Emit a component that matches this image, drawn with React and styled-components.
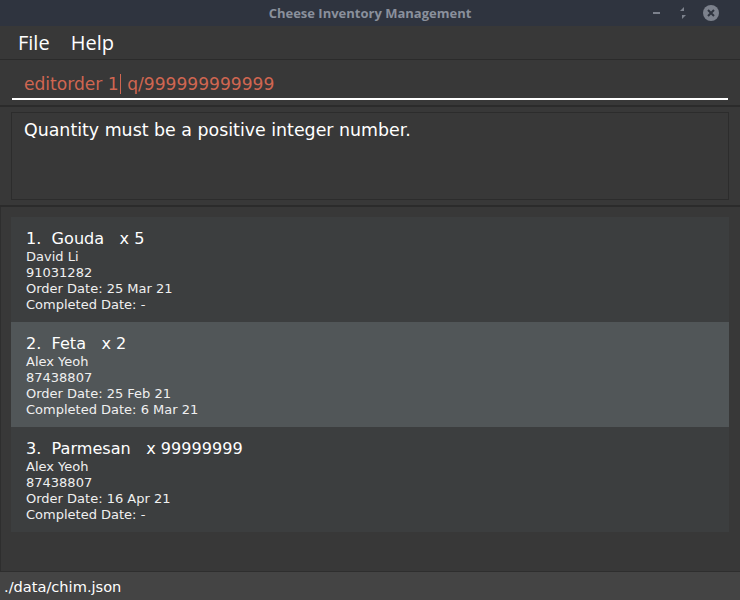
import React from "react";
import styled, { createGlobalStyle } from "styled-components";

const GlobalStyle = createGlobalStyle`
  html, body {
    margin: 0;
    padding: 0;
    background: #383838;
  }
  body {
    font-family: "DejaVu Sans", "Liberation Sans", sans-serif;
  }
`;

const orders = [
  { id: 1, cheese: "Gouda", qty: "5", name: "David Li", phone: "91031282", orderDate: "25 Mar 21", completed: "-" },
  { id: 2, cheese: "Feta", qty: "2", name: "Alex Yeoh", phone: "87438807", orderDate: "25 Feb 21", completed: "6 Mar 21" },
  { id: 3, cheese: "Parmesan", qty: "99999999", name: "Alex Yeoh", phone: "87438807", orderDate: "16 Apr 21", completed: "-" },
];

const Window = styled.div`
  width: 740px;
  height: 600px;
  display: flex;
  flex-direction: column;
  background: #383838;
  overflow: hidden;
`;

const TitleBar = styled.div`
  height: 26px;
  flex: none;
  background: #2f343f;
  display: flex;
  align-items: center;
  justify-content: center;
  position: relative;
`;

const Title = styled.span`
  font-family: "Open Sans", "DejaVu Sans", sans-serif;
  font-weight: 700;
  font-size: 13px;
  color: #8a909c;
`;

const Controls = styled.div`
  position: absolute;
  right: 20px;
  top: 0;
  height: 26px;
  display: flex;
  align-items: center;
  gap: 12px;
`;

const MenuBar = styled.div`
  height: 33px;
  flex: none;
  display: flex;
  align-items: center;
  gap: 21px;
  padding-left: 18px;
  border-bottom: 1px solid #2b2b2b;
`;

const MenuItem = styled.span`
  font-family: "Open Sans", "DejaVu Sans", sans-serif;
  font-size: 20px;
  color: #ffffff;
`;

const CommandArea = styled.div`
  height: 45px;
  flex: none;
  padding: 0 12px;
  border-bottom: 2px solid #2b2b2b;
  display: flex;
`;

const CommandField = styled.div`
  flex: 1;
  border-bottom: 2px solid #ffffff;
  margin-bottom: 5px;
  display: flex;
  align-items: center;
  padding-left: 12px;
  padding-top: 9px;
  font-size: 17.1px;
  color: #d06651;
`;

const CommandText = styled.span`
  white-space: pre;
`;

const Caret = styled.span`
  display: inline-block;
  width: 1px;
  height: 20px;
  background: #d06651;
  margin: 0 1px;
  vertical-align: middle;
`;

const ResultArea = styled.div`
  height: 100px;
  flex: none;
  padding: 5px 11px 0;
  border-bottom: 2px solid #2b2b2b;
  box-sizing: border-box;
  display: flex;
  flex-direction: column;
`;

const ResultBox = styled.div`
  height: 88px;
  border: 1px solid #2c2c2c;
  padding: 7px 12px;
  box-sizing: border-box;
  font-size: 17.4px;
  color: #ffffff;
`;

const ListPanel = styled.div`
  flex: 1;
  padding: 10px 11px 10px 10px;
  border-left: 1px solid #2e2e2e;
`;

const Card = styled.div`
  height: 105px;
  box-sizing: border-box;
  padding: 12px 15px 0;
  background: ${(p) => (p.$selected ? "#515658" : "#3c3e3f")};
  color: #ffffff;
`;

const CardTitle = styled.div`
  font-size: 16.1px;
  line-height: 20px;
  white-space: pre;
`;

const CardLine = styled.div`
  font-size: 13px;
  line-height: 16px;
  color: #f0f0f0;
`;

const StatusBar = styled.div`
  height: 28px;
  flex: none;
  background: #444444;
  border-top: 1px solid #2e2e2e;
  display: flex;
  align-items: center;
  padding-left: 4px;
  font-size: 14.6px;
  color: #ffffff;
`;

const WindowControls = () => (
  <Controls>
    <svg width="14" height="14" viewBox="0 0 14 14">
      <rect x="3" y="6" width="7" height="2" fill="#7c818c" />
    </svg>
    <svg width="14" height="14" viewBox="0 0 14 14">
      <path d="M4 5 L8 1 L8 5 Z M6 9 L10 9 L6 13 Z" fill="#7c818c" />
    </svg>
    <svg width="18" height="18" viewBox="0 0 18 18">
      <circle cx="9" cy="9" r="8" fill="#7c818c" />
      <path d="M6 6 L12 12 M12 6 L6 12" stroke="#2f343f" strokeWidth="2" />
    </svg>
  </Controls>
);

const OrderCard = ({ order, selected }) => (
  <Card $selected={selected}>
    <CardTitle>{`${order.id}.  ${order.cheese}   x ${order.qty}`}</CardTitle>
    <CardLine>{order.name}</CardLine>
    <CardLine>{order.phone}</CardLine>
    <CardLine>Order Date: {order.orderDate}</CardLine>
    <CardLine>Completed Date: {order.completed}</CardLine>
  </Card>
);

export default function App() {
  return (
    <>
      <GlobalStyle />
      <Window>
        <TitleBar>
          <Title>Cheese Inventory Management</Title>
          <WindowControls />
        </TitleBar>
        <MenuBar>
          <MenuItem>File</MenuItem>
          <MenuItem>Help</MenuItem>
        </MenuBar>
        <CommandArea>
          <CommandField>
            <CommandText>editorder 1</CommandText>
            <Caret />
            <CommandText> q/999999999999</CommandText>
          </CommandField>
        </CommandArea>
        <ResultArea>
          <ResultBox>Quantity must be a positive integer number.</ResultBox>
        </ResultArea>
        <ListPanel>
          {orders.map((o) => (
            <OrderCard key={o.id} order={o} selected={o.id === 2} />
          ))}
        </ListPanel>
        <StatusBar>./data/chim.json</StatusBar>
      </Window>
    </>
  );
}
